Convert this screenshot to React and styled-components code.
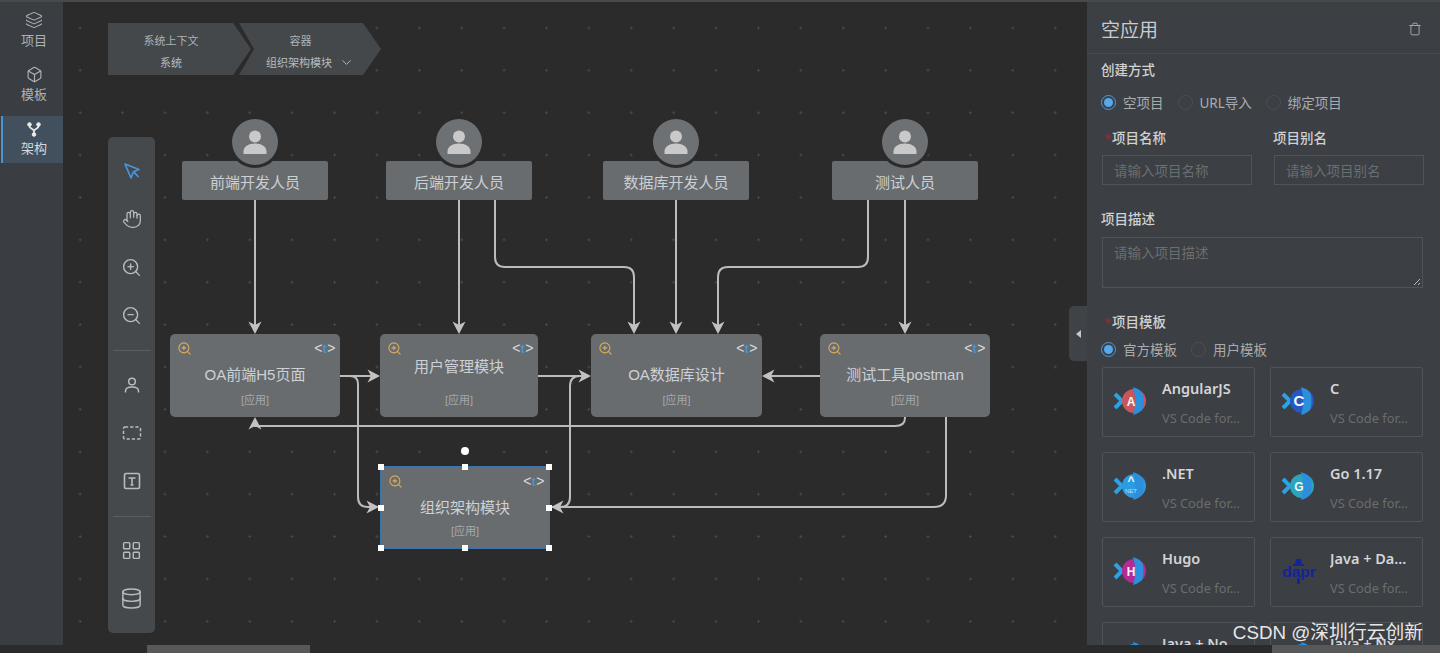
import React from "react";
import styled, { createGlobalStyle } from "styled-components";
import { ChevronDown, Database, Hand, LayoutGrid, Layers, Box, Trash, ZoomIn, ZoomOut } from "lucide-react";

const CANVAS_LEFT = 63;
const SANS = `"Liberation Sans", "Noto Sans CJK SC", sans-serif`;
const CJK = `"Noto Sans", "Noto Sans CJK SC", sans-serif`;

const GlobalStyle = createGlobalStyle`
  html, body {
    margin: 0;
    height: 100%;
    background: #2a2b2c;
    overflow: hidden;
  }
  * { box-sizing: border-box; }
`;

const Page = styled.div`
  width: 1440px;
  height: 653px;
  display: flex;
  flex-direction: column;
  position: relative;
  font-family: ${CJK};
  border-top: 2px solid #47494b;
  overflow: hidden;
`;

const Main = styled.div`
  flex: 1;
  min-height: 0;
  display: flex;
`;

const BottomBar = styled.div`
  height: 8px;
  display: flex;
  background: #2a2b2c;
`;

const Thumb = styled.div`
  height: 8px;
  background: #565859;
  width: ${(p) => p.$width}px;
  margin-left: ${(p) => p.$left};
`;

const Sidebar = styled.nav`
  width: 63px;
  flex: none;
  padding-top: 4px;
  display: flex;
  flex-direction: column;
  gap: 8px;
  background: #3a3e42;
`;

const SideItem = styled.div`
  height: 47px;
  padding-left: ${(p) => (p.$active ? 2 : 5)}px;
  display: flex;
  flex-direction: column;
  align-items: center;
  justify-content: center;
  gap: 2px;
  font-size: 13px;
  line-height: 18px;
  color: ${(p) => (p.$active ? "#d5d9dc" : "#aeb2b5")};
  background: ${(p) => (p.$active ? "#41505c" : "transparent")};
  border-left: ${(p) => (p.$active ? "2px solid #4c94cf" : "none")};
  margin-left: ${(p) => (p.$active ? "1px" : "0")};
`;

const Canvas = styled.div`
  flex: 1;
  min-width: 0;
  position: relative;
  background-color: #2b2b2c;
  background-image: radial-gradient(circle, #484849 1px, transparent 1.4px);
  background-size: 42.4px 42.4px;
  background-position: -4px 4.7px;
`;

const Crumbs = styled.div`
  position: absolute;
  left: 45px;
  top: 21px;
  display: flex;
`;

const Crumb = styled.div`
  width: ${(p) => (p.$first ? 143 : 142)}px;
  height: 52px;
  margin-left: ${(p) => (p.$first ? 0 : -12)}px;
  padding-top: 4px;
  padding-right: ${(p) => (p.$first ? 17 : 0)}px;
  padding-left: 0;
  display: flex;
  flex-direction: column;
  align-items: center;
  justify-content: center;
  gap: 5px;
  font-size: 11px;
  line-height: 17px;
  color: #aeb1b3;
  background: #44484b;
  clip-path: ${(p) =>
    p.$first
      ? "polygon(0 0, 125px 0, 100% 50%, 125px 100%, 0 100%)"
      : "polygon(0 0, 124px 0, 100% 50%, 124px 100%, 0 100%, 15px 50%)"};
`;

const CrumbLabel = styled.span`
  margin-right: ${(p) => p.$shift || 0}px;
`;

const CrumbValue = styled.span`
  display: flex;
  align-items: center;
  gap: 7px;
  color: #b8bbbd;
`;

const Toolbar = styled.div`
  position: absolute;
  left: 45px;
  top: 135px;
  width: 47px;
  height: 496px;
  padding-top: 10px;
  display: flex;
  flex-direction: column;
  align-items: center;
  background: #45494c;
  border-radius: 5px;
  color: #b9bcbe;
`;

const Tool = styled.div`
  width: 100%;
  height: 48px;
  display: flex;
  align-items: center;
  justify-content: center;
`;

const ToolRule = styled.div`
  width: 38px;
  height: 1px;
  margin: 11px 0 ${(p) => p.$bottom}px;
  background: #5b5f62;
`;

const Edges = styled.svg`
  position: absolute;
  left: 0;
  top: -2px;
  pointer-events: none;
`;

const Person = styled.div`
  position: absolute;
  left: ${(p) => p.$x - CANVAS_LEFT}px;
  top: 159px;
  width: 146px;
  height: 39px;
  display: flex;
  align-items: center;
  justify-content: center;
  padding-top: 1px;
  font-size: 15px;
  color: #ccd0d4;
  background: #686c6f;
  border-radius: 2px;
`;

const Avatar = styled.div`
  position: absolute;
  left: 50px;
  top: -42px;
  width: 46px;
  height: 46px;
  display: flex;
  align-items: center;
  justify-content: center;
  border-radius: 50%;
  background: #6e7173;
  box-shadow: 0 0 0 3px #2b2b2c;
`;

const AppNode = styled.div`
  position: absolute;
  left: ${(p) => p.$x - CANVAS_LEFT}px;
  top: ${(p) => p.$y - 2}px;
  width: ${(p) => p.$w}px;
  height: 83px;
  background: #686c6f;
  border-radius: ${(p) => (p.$selected ? 0 : 5)}px;
  border: ${(p) => (p.$selected ? "1px solid #3b74ad" : "none")};
`;

const NodeTitle = styled.div`
  position: absolute;
  left: 0;
  right: 0;
  top: ${(p) => p.$top}px;
  text-align: center;
  font-family: ${SANS};
  font-size: 15px;
  line-height: 20px;
  color: #cdd1d6;
`;

const NodeKind = styled.div`
  position: absolute;
  left: 0;
  right: 0;
  bottom: 10px;
  text-align: center;
  font-family: ${SANS};
  font-size: 11px;
  line-height: 14px;
  color: #a5a8aa;
`;

const NodeZoom = styled.span`
  position: absolute;
  left: 7px;
  top: 7px;
  display: flex;
  color: #dcae5c;
`;

const NodeCode = styled.span`
  position: absolute;
  right: 4px;
  top: 5px;
  font-family: ${SANS};
  font-size: 14px;
  line-height: 18px;
  letter-spacing: 0.5px;
  color: #dadcde;
`;

const CodeT = styled.span`
  color: #4a94d0;
  font-weight: 700;
  font-size: 12px;
`;

const Handle = styled.span`
  position: absolute;
  left: ${(p) => p.$x}%;
  top: ${(p) => p.$y}%;
  width: 6px;
  height: 6px;
  margin: -3px 0 0 -3px;
  background: #fff;
`;

const RotateHandle = styled.span`
  position: absolute;
  left: 50%;
  top: -20px;
  width: 8px;
  height: 8px;
  margin-left: -4px;
  border-radius: 50%;
  background: #fff;
`;

const Collapse = styled.div`
  position: absolute;
  right: 0;
  top: 304px;
  width: 18px;
  height: 55px;
  display: flex;
  align-items: center;
  justify-content: center;
  background: #3f4347;
  border-radius: 5px 0 0 5px;
`;

const CollapseArrow = styled.span`
  width: 0;
  height: 0;
  border-top: 4px solid transparent;
  border-bottom: 4px solid transparent;
  border-right: 5px solid #c6c8ca;
`;

const Panel = styled.aside`
  width: 353px;
  flex: none;
  overflow: hidden;
  background: #3c3f43;
`;

const PanelHead = styled.header`
  height: 52px;
  padding: 2px 18px 0 14px;
  display: flex;
  align-items: center;
  justify-content: space-between;
  font-size: 19px;
  color: #c9cccf;
  border-bottom: 1px solid #484b4f;
`;

const PanelBody = styled.div`
  padding: 6px 17px 0 15px;
  display: flex;
  flex-direction: column;
`;

const Label = styled.div`
  position: relative;
  height: 20px;
  margin-left: ${(p) => (p.$required ? 0 : -1)}px;
  margin-top: ${(p) => p.$top || 0}px;
  font-size: 13.5px;
  line-height: 20px;
  font-weight: 500;
  color: #cfd1d3;
  padding-left: ${(p) => (p.$required ? 10 : 0)}px;

  &::before {
    content: "${(p) => (p.$required ? "*" : "")}";
    position: absolute;
    left: 2px;
    top: 1px;
    color: #7d3038;
    font-weight: 700;
  }
`;

const RadioRow = styled.div`
  display: flex;
  align-items: center;
  gap: 14px;
  height: 20px;
  margin-left: -1px;
  margin-top: ${(p) => p.$top}px;
`;

const RadioItem = styled.label`
  display: flex;
  align-items: center;
  gap: 7px;
  font-size: 13.5px;
  color: #a9acaf;
`;

const RadioDot = styled.span`
  width: 15px;
  height: 15px;
  display: flex;
  align-items: center;
  justify-content: center;
  border-radius: 50%;
  border: 1px solid ${(p) => (p.$on ? "#4f9bdc" : "#4c5054")};

  &::after {
    content: "";
    width: 9px;
    height: 9px;
    border-radius: 50%;
    background: ${(p) => (p.$on ? "#55a9ee" : "transparent")};
  }
`;

const TwoCols = styled.div`
  display: grid;
  grid-template-columns: 150px 150px;
  column-gap: 22px;
  margin-top: 16px;
`;

const Field = styled.div`
  display: flex;
  flex-direction: column;
  gap: 7px;
`;

const Input = styled.div`
  height: 30px;
  padding-left: 11px;
  display: flex;
  align-items: center;
  font-size: 13.5px;
  color: #6a6e71;
  border: 1px solid #505357;
`;

const TextArea = styled.div`
  position: relative;
  height: 51px;
  margin-top: 8px;
  padding: 5px 11px;
  font-size: 13.5px;
  line-height: 20px;
  color: #6a6e71;
  border: 1px solid #505357;
`;

const Grip = styled.svg`
  position: absolute;
  right: 1px;
  bottom: 1px;
`;

const Cards = styled.div`
  display: grid;
  grid-template-columns: 153px 153px;
  column-gap: 15px;
  row-gap: 15px;
  margin-top: 8px;
`;

const Card = styled.div`
  height: 70px;
  padding: 10px 8px 0 59px;
  position: relative;
  border: 1px solid #505357;
  border-radius: 2px;
`;

const CardLogo = styled.span`
  position: absolute;
  left: 10px;
  top: 16px;
  display: flex;
`;

const CardName = styled.div`
  font-size: 14.5px;
  line-height: 20px;
  font-weight: 600;
  white-space: nowrap;
  overflow: hidden;
  text-overflow: ellipsis;
  color: #d3d5d7;
`;

const CardSub = styled.div`
  margin-top: 11px;
  font-size: 12.8px;
  line-height: 18px;
  white-space: nowrap;
  color: #696d70;
`;

const Watermark = styled.div`
  position: absolute;
  right: 17px;
  bottom: 8px;
  font-family: ${SANS};
  font-size: 18.8px;
  line-height: 24px;
  color: #e6e7e8;
  white-space: nowrap;
`;

const PointerIcon = () => (
  <svg width="18" height="18" viewBox="0 0 18 18" fill="none" stroke="#4a94d8" strokeWidth="1.7" strokeLinejoin="round">
    <path d="M2 2l14 5.5-5.5 2.2L8 16z" />
    <path d="M10.5 9.7L15.5 15" />
  </svg>
);

const UserIcon = () => (
  <svg width="18" height="18" viewBox="0 0 18 18" fill="none" stroke="currentColor" strokeWidth="1.5">
    <circle cx="9" cy="5.5" r="3.3" />
    <path d="M2.5 16.5v-1.5c0-2.7 2.4-4 6.5-4s6.5 1.3 6.5 4v1.5" />
  </svg>
);

const DashedRectIcon = () => (
  <svg width="20" height="16" viewBox="0 0 20 16" fill="none" stroke="currentColor" strokeWidth="1.5" strokeDasharray="3.2 2">
    <rect x="1.5" y="2" width="17" height="12" rx="1.5" />
  </svg>
);

const TextBoxIcon = () => (
  <svg width="18" height="18" viewBox="0 0 18 18" fill="none" stroke="currentColor" strokeWidth="1.6">
    <rect x="1.5" y="1.5" width="15" height="15" rx="1.5" />
    <path d="M5.5 6h7M9 6v7M7.5 13h3" />
  </svg>
);

const ForkIcon = () => (
  <svg width="14" height="15" viewBox="0 0 14 15" fill="#e8eaec" stroke="#e8eaec">
    <circle cx="2.5" cy="2.5" r="1.8" />
    <circle cx="11.5" cy="2.5" r="1.8" />
    <circle cx="7" cy="12.5" r="1.8" />
    <path d="M2.5 3v1.5c0 2 4.5 2.5 4.5 4.5v3M11.5 3v1.5c0 2-4.5 2.5-4.5 4.5" fill="none" strokeWidth="1.7" />
  </svg>
);

const PersonGlyph = () => (
  <svg width="26" height="26" viewBox="0 0 26 26" fill="#c9c9c9">
    <circle cx="13" cy="7.5" r="6" />
    <path d="M1.5 25v-2.5c0-5 5-8 11.5-8s11.5 3 11.5 8V25z" />
  </svg>
);

const VsLogo = ({ color, letter, sub, letterSize = 12 }) => (
  <svg width="35" height="34" viewBox="0 0 35 34">
    <path d="M2 10L9 17L2 24" fill="none" stroke="#29a3e6" strokeWidth="4" />
    <circle cx="21" cy="17" r="12" fill={color} />
    <path d="M20 3Q27 5 29.5 9Q31.5 17 29.5 25Q27 29 20 31Q24.5 17 20 3z" fill="#2b8fdc" />
    <text x="18" y={sub ? 16 : 21.5} textAnchor="middle" fontFamily={SANS} fontSize={letterSize} fontWeight="700" fill="#f4f6f8">
      {letter}
    </text>
    {sub && (
      <text x="18" y="24" textAnchor="middle" fontFamily={SANS} fontSize="6" fill="#bfe0f5">
        {sub}
      </text>
    )}
  </svg>
);

const DaprLogo = () => (
  <svg width="35" height="34" viewBox="0 0 35 34">
    <path d="M12 10h2l1-5h5l1 5h2v2H12zM16 24h3v6h-3z" fill="#13249a" />
    <text x="18" y="23" textAnchor="middle" fontFamily={SANS} fontSize="15.5" fontWeight="700" fill="#13249a">
      dapr
    </text>
  </svg>
);

const Arrow = ({ x, y, dir }) => {
  const rotate = { down: 0, up: 180, right: -90, left: 90 }[dir];
  return <path d="M0 0L-6.5 -12.5L0 -9L6.5 -12.5Z" fill="#c2c2c2" transform={`translate(${x} ${y}) rotate(${rotate})`} />;
};

// page coordinates, the svg viewBox starts at the canvas corner
const LINES = [
  "M255 200V330",
  "M459 200V330",
  "M495 200V257q0 10 10 10H624q10 0 10 10V330",
  "M676 200V330",
  "M868 200V257q0 10-10 10H728q-10 0-10 10V330",
  "M905 200V330",
  "M340 376H376",
  "M350 376q8 0 8 8V497q0 10 10 10H376",
  "M538 376H588",
  "M820 376H766",
  "M905 417v1q0 8-10 8H255V420",
  "M946 417V495q0 12-12 12H556",
  "M552 507h8q10 0 10-10V386q0-10 10-10H588",
];

const ARROWS = [
  { x: 255, y: 334, dir: "down" },
  { x: 459, y: 334, dir: "down" },
  { x: 634, y: 334, dir: "down" },
  { x: 676, y: 334, dir: "down" },
  { x: 718, y: 334, dir: "down" },
  { x: 905, y: 334, dir: "down" },
  { x: 380, y: 376, dir: "right" },
  { x: 379, y: 507, dir: "right" },
  { x: 591, y: 376, dir: "right" },
  { x: 762, y: 376, dir: "left" },
  { x: 255, y: 417, dir: "up" },
  { x: 551, y: 507, dir: "left" },
];

const PEOPLE = [
  { name: "前端开发人员", x: 182 },
  { name: "后端开发人员", x: 386 },
  { name: "数据库开发人员", x: 603 },
  { name: "测试人员", x: 832 },
];

const APPS = [
  { name: "OA前端H5页面", x: 170, y: 334, w: 170, top: 31 },
  { name: "用户管理模块", x: 380, y: 334, w: 158, top: 23 },
  { name: "OA数据库设计", x: 591, y: 334, w: 171, top: 31 },
  { name: "测试工具postman", x: 820, y: 334, w: 170, top: 31 },
];

const HANDLES = [
  [0, 0],
  [50, 0],
  [100, 0],
  [0, 50],
  [100, 50],
  [0, 100],
  [50, 100],
  [100, 100],
];

const TEMPLATES = [
  { name: "AngularJS", logo: <VsLogo color="#c9565a" letter="A" /> },
  { name: "C", logo: <VsLogo color="#2459c4" letter="C" letterSize={15} /> },
  { name: ".NET", logo: <VsLogo color="#2c9be0" letter="^" sub="NET" /> },
  { name: "Go 1.17", logo: <VsLogo color="#2aa5bd" letter="G" /> },
  { name: "Hugo", logo: <VsLogo color="#b62a95" letter="H" /> },
  { name: "Java + Da...", logo: <DaprLogo /> },
  { name: "Java + No...", logo: <VsLogo color="#2b8fdc" letter="" /> },
  { name: "Java + Nx", logo: <VsLogo color="#2b8fdc" letter="" /> },
];

const NodeContent = ({ name, top }) => (
  <>
    <NodeZoom>
      <ZoomIn size={15} strokeWidth={1.7} />
    </NodeZoom>
    <NodeCode>
      {"<"}
      <CodeT>t</CodeT>
      {">"}
    </NodeCode>
    <NodeTitle $top={top}>{name}</NodeTitle>
    <NodeKind>[应用]</NodeKind>
  </>
);

const Radio = ({ on, children }) => (
  <RadioItem>
    <RadioDot $on={on} />
    {children}
  </RadioItem>
);

export default function App() {
  return (
    <Page>
      <GlobalStyle />
      <Main>
        <Sidebar>
          <SideItem>
            <Layers size={18} strokeWidth={1.4} />
            项目
          </SideItem>
          <SideItem>
            <Box size={17} strokeWidth={1.6} />
            模板
          </SideItem>
          <SideItem $active>
            <ForkIcon />
            架构
          </SideItem>
        </Sidebar>

        <Canvas>
          <Crumbs>
            <Crumb $first>
              <CrumbLabel>系统上下文</CrumbLabel>
              <CrumbValue>系统</CrumbValue>
            </Crumb>
            <Crumb>
              <CrumbLabel $shift={19}>容器</CrumbLabel>
              <CrumbValue>
                组织架构模块
                <ChevronDown size={15} strokeWidth={1.5} />
              </CrumbValue>
            </Crumb>
          </Crumbs>

          <Edges width="1024" height="645" viewBox="63 0 1024 645" fill="none">
            {LINES.map((d) => (
              <path key={d} d={d} stroke="#bcbcbc" strokeWidth="2" />
            ))}
          </Edges>

          {PEOPLE.map((person) => (
            <Person key={person.name} $x={person.x}>
              <Avatar>
                <PersonGlyph />
              </Avatar>
              {person.name}
            </Person>
          ))}

          {APPS.map((app) => (
            <AppNode key={app.name} $x={app.x} $y={app.y} $w={app.w}>
              <NodeContent name={app.name} top={app.top} />
            </AppNode>
          ))}

          <AppNode $x={380} $y={466} $w={170} $selected>
            <NodeContent name="组织架构模块" top={31} />
            <RotateHandle />
            {HANDLES.map(([x, y]) => (
              <Handle key={`${x}-${y}`} $x={x} $y={y} />
            ))}
          </AppNode>

          <Edges width="1024" height="645" viewBox="63 0 1024 645" fill="none">
            {ARROWS.map((arrow) => (
              <Arrow key={`${arrow.x}-${arrow.y}`} {...arrow} />
            ))}
          </Edges>

          <Toolbar>
            <Tool>
              <PointerIcon />
            </Tool>
            <Tool>
              <Hand size={20} strokeWidth={1.5} />
            </Tool>
            <Tool>
              <ZoomIn size={21} strokeWidth={1.6} />
            </Tool>
            <Tool>
              <ZoomOut size={21} strokeWidth={1.6} />
            </Tool>
            <ToolRule $bottom={10} />
            <Tool>
              <UserIcon />
            </Tool>
            <Tool>
              <DashedRectIcon />
            </Tool>
            <Tool>
              <TextBoxIcon />
            </Tool>
            <ToolRule $bottom={9} />
            <Tool>
              <LayoutGrid size={21} strokeWidth={1.6} />
            </Tool>
            <Tool>
              <Database size={23} strokeWidth={1.5} />
            </Tool>
          </Toolbar>

          <Collapse>
            <CollapseArrow />
          </Collapse>
        </Canvas>

        <Panel>
          <PanelHead>
            空应用
            <Trash size={14} color="#a9acaf" strokeWidth={1.6} />
          </PanelHead>
          <PanelBody>
            <Label>创建方式</Label>
            <RadioRow $top={12}>
              <Radio on>空项目</Radio>
              <Radio>URL导入</Radio>
              <Radio>绑定项目</Radio>
            </RadioRow>
            <TwoCols>
              <Field>
                <Label $required>项目名称</Label>
                <Input>请输入项目名称</Input>
              </Field>
              <Field>
                <Label>项目别名</Label>
                <Input>请输入项目别名</Input>
              </Field>
            </TwoCols>
            <Label $top={24}>项目描述</Label>
            <TextArea>
              请输入项目描述
              <Grip width="8" height="8" viewBox="0 0 8 8" stroke="#b8babc" fill="none">
                <path d="M1 7l6-6M5 7l2-2" />
              </Grip>
            </TextArea>
            <Label $required $top={24}>
              项目模板
            </Label>
            <RadioRow $top={7}>
              <Radio on>官方模板</Radio>
              <Radio>用户模板</Radio>
            </RadioRow>
            <Cards>
              {TEMPLATES.map((template) => (
                <Card key={template.name}>
                  <CardLogo>{template.logo}</CardLogo>
                  <CardName>{template.name}</CardName>
                  <CardSub>VS Code for...</CardSub>
                </Card>
              ))}
            </Cards>
          </PanelBody>
        </Panel>
      </Main>
      <BottomBar>
        <Thumb $width={163} $left="147px" />
        <Thumb $width={168} $left="auto" />
      </BottomBar>
      <Watermark>CSDN @深圳行云创新</Watermark>
    </Page>
  );
}
